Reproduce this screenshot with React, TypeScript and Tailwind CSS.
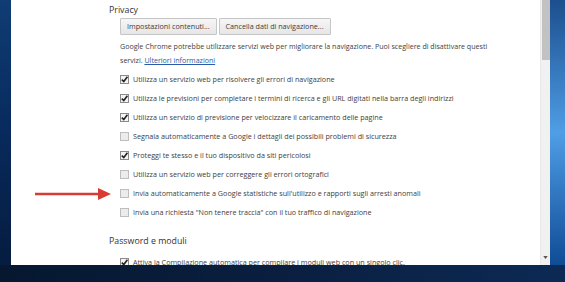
import React from "react";

const font = { fontFamily: '"Open Sans", "Noto Sans", sans-serif' };

function Check({ checked }: { checked: boolean }) {
  return checked ? (
    <div className="relative w-[9px] h-[9px] border border-[#8a8a8a] bg-[#f4f4f4] shrink-0">
      <svg viewBox="0 0 9 9" className="absolute left-[-1px] top-[-1px] w-[9px] h-[9px]">
        <path d="M1.8 4.6 L3.8 6.6 L7.4 1.8" fill="none" stroke="#222" strokeWidth="1.6" />
      </svg>
    </div>
  ) : (
    <div className="w-[9px] h-[9px] border border-[#bdbdbd] bg-[#ececec] shrink-0" />
  );
}

function Row({ checked, text }: { checked: boolean; text: string }) {
  return (
    <div className="flex items-center h-[19px] gap-[4px] pl-[120px]">
      <Check checked={checked} />
      <span className="text-[7.2px] text-[#3e3e3e] whitespace-nowrap">{text}</span>
    </div>
  );
}

const rows: [boolean, string][] = [
  [true, "Utilizza un servizio web per risolvere gli errori di navigazione"],
  [true, "Utilizza le previsioni per completare i termini di ricerca e gli URL digitati nella barra degli indirizzi"],
  [true, "Utilizza un servizio di previsione per velocizzare il caricamento delle pagine"],
  [false, "Segnala automaticamente a Google i dettagli dei possibili problemi di sicurezza"],
  [true, "Proteggi te stesso e il tuo dispositivo da siti pericolosi"],
  [false, "Utilizza un servizio web per correggere gli errori ortografici"],
  [false, "Invia automaticamente a Google statistiche sull'utilizzo e rapporti sugli arresti anomali"],
  [false, "Invia una richiesta \"Non tenere traccia\" con il tuo traffico di navigazione"],
];

export default function App() {
  return (
    <div className="relative w-[565px] h-[282px] overflow-hidden flex flex-col bg-[#081a36]" style={font}>
      <div className="flex h-[265px]">
        <div className="w-[11px] bg-gradient-to-b from-[#0f3d74] via-[#082a5c] to-[#061c40]" />
        <div className="flex-1 flex bg-white overflow-hidden">
          <div className="flex-1 flex flex-col pt-[4px]">
            <div className="h-[18px] flex items-center pl-[98px] text-[8.8px] text-[#333]">Privacy</div>
            <div className="flex gap-[2px] pl-[109px] mt-[1px]">
              <div className="h-[17px] px-[6px] flex items-center border border-[#c6c6c6] bg-gradient-to-b from-[#f6f6f6] to-[#e6e6e6] rounded-[1px] text-[7.2px] text-[#3e3e3e]">
                Impostazioni contenuti...
              </div>
              <div className="h-[17px] px-[6px] flex items-center border border-[#c6c6c6] bg-gradient-to-b from-[#f6f6f6] to-[#e6e6e6] rounded-[1px] text-[7.2px] text-[#3e3e3e]">
                Cancella dati di navigazione...
              </div>
            </div>
            <div className="pl-[109px] mt-[4px] text-[7.1px] leading-[14px] text-[#3e3e3e]">
              <div className="whitespace-nowrap">
                Google Chrome potrebbe utilizzare servizi web per migliorare la navigazione. Puoi scegliere di disattivare questi
              </div>
              <div className="whitespace-nowrap">
                servizi. <span className="text-[#2a5aa8] underline">Ulteriori informazioni</span>
              </div>
            </div>
            <div className="mt-[3px] -ml-[11px]">
              {rows.map(([c, t], i) => (
                <Row key={i} checked={c} text={t} />
              ))}
            </div>
            <div className="h-[18px] mt-[13px] flex items-center pl-[98px] text-[8.8px] text-[#333]">Password e moduli</div>
            <div className="mt-[5px] -ml-[11px]">
              <Row checked={true} text="Attiva la Compilazione automatica per compilare i moduli web con un singolo clic." />
            </div>
          </div>
          <div className="w-[10px] bg-[#f1f1f1] flex flex-col items-center border-l border-[#e8e8e8]">
            <div className="w-[8px] h-[60px] bg-[#c2c2c2]" />
            <div className="flex-1" />
            <svg viewBox="0 0 6 4" className="w-[5px] h-[3px] mb-[6px]">
              <path d="M0 0 L6 0 L3 4 Z" fill="#555" />
            </svg>
          </div>
        </div>
        <div className="w-[15px] bg-gradient-to-b from-[#1d4f8e] via-[#4f9ee6] to-[#0f4c96]" />
      </div>
      <div className="flex-1 bg-gradient-to-r from-[#061830] via-[#0a1f40] to-[#0c2a55]" />
      <svg className="absolute left-[34px] top-[187px]" width="78" height="14" viewBox="0 0 78 14">
        <line x1="1" y1="7" x2="66" y2="7" stroke="#d83a34" strokeWidth="2.4" />
        <path d="M64 1 L77 7 L64 13 Z" fill="#d83a34" />
      </svg>
    </div>
  );
}
